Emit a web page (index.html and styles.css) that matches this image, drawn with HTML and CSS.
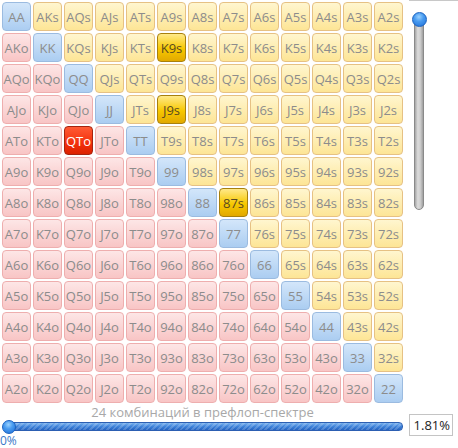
FILE: index.html
```html
<!DOCTYPE html>
<html>
<head>
<meta charset="utf-8">
<link rel="stylesheet" href="styles.css">
</head>
<body>
<div class="app">
  <div class="top">
    <div class="grid">
      <div class="c p">AA</div><div class="c s">AKs</div><div class="c s">AQs</div><div class="c s">AJs</div><div class="c s">ATs</div><div class="c s">A9s</div><div class="c s">A8s</div><div class="c s">A7s</div><div class="c s">A6s</div><div class="c s">A5s</div><div class="c s">A4s</div><div class="c s">A3s</div><div class="c s">A2s</div>
      <div class="c o">AKo</div><div class="c p">KK</div><div class="c s">KQs</div><div class="c s">KJs</div><div class="c s">KTs</div><div class="c s sel">K9s</div><div class="c s">K8s</div><div class="c s">K7s</div><div class="c s">K6s</div><div class="c s">K5s</div><div class="c s">K4s</div><div class="c s">K3s</div><div class="c s">K2s</div>
      <div class="c o">AQo</div><div class="c o">KQo</div><div class="c p">QQ</div><div class="c s">QJs</div><div class="c s">QTs</div><div class="c s">Q9s</div><div class="c s">Q8s</div><div class="c s">Q7s</div><div class="c s">Q6s</div><div class="c s">Q5s</div><div class="c s">Q4s</div><div class="c s">Q3s</div><div class="c s">Q2s</div>
      <div class="c o">AJo</div><div class="c o">KJo</div><div class="c o">QJo</div><div class="c p">JJ</div><div class="c s">JTs</div><div class="c s sel">J9s</div><div class="c s">J8s</div><div class="c s">J7s</div><div class="c s">J6s</div><div class="c s">J5s</div><div class="c s">J4s</div><div class="c s">J3s</div><div class="c s">J2s</div>
      <div class="c o">ATo</div><div class="c o">KTo</div><div class="c o hot">QTo</div><div class="c o">JTo</div><div class="c p">TT</div><div class="c s">T9s</div><div class="c s">T8s</div><div class="c s">T7s</div><div class="c s">T6s</div><div class="c s">T5s</div><div class="c s">T4s</div><div class="c s">T3s</div><div class="c s">T2s</div>
      <div class="c o">A9o</div><div class="c o">K9o</div><div class="c o">Q9o</div><div class="c o">J9o</div><div class="c o">T9o</div><div class="c p">99</div><div class="c s">98s</div><div class="c s">97s</div><div class="c s">96s</div><div class="c s">95s</div><div class="c s">94s</div><div class="c s">93s</div><div class="c s">92s</div>
      <div class="c o">A8o</div><div class="c o">K8o</div><div class="c o">Q8o</div><div class="c o">J8o</div><div class="c o">T8o</div><div class="c o">98o</div><div class="c p">88</div><div class="c s sel">87s</div><div class="c s">86s</div><div class="c s">85s</div><div class="c s">84s</div><div class="c s">83s</div><div class="c s">82s</div>
      <div class="c o">A7o</div><div class="c o">K7o</div><div class="c o">Q7o</div><div class="c o">J7o</div><div class="c o">T7o</div><div class="c o">97o</div><div class="c o">87o</div><div class="c p">77</div><div class="c s">76s</div><div class="c s">75s</div><div class="c s">74s</div><div class="c s">73s</div><div class="c s">72s</div>
      <div class="c o">A6o</div><div class="c o">K6o</div><div class="c o">Q6o</div><div class="c o">J6o</div><div class="c o">T6o</div><div class="c o">96o</div><div class="c o">86o</div><div class="c o">76o</div><div class="c p">66</div><div class="c s">65s</div><div class="c s">64s</div><div class="c s">63s</div><div class="c s">62s</div>
      <div class="c o">A5o</div><div class="c o">K5o</div><div class="c o">Q5o</div><div class="c o">J5o</div><div class="c o">T5o</div><div class="c o">95o</div><div class="c o">85o</div><div class="c o">75o</div><div class="c o">65o</div><div class="c p">55</div><div class="c s">54s</div><div class="c s">53s</div><div class="c s">52s</div>
      <div class="c o">A4o</div><div class="c o">K4o</div><div class="c o">Q4o</div><div class="c o">J4o</div><div class="c o">T4o</div><div class="c o">94o</div><div class="c o">84o</div><div class="c o">74o</div><div class="c o">64o</div><div class="c o">54o</div><div class="c p">44</div><div class="c s">43s</div><div class="c s">42s</div>
      <div class="c o">A3o</div><div class="c o">K3o</div><div class="c o">Q3o</div><div class="c o">J3o</div><div class="c o">T3o</div><div class="c o">93o</div><div class="c o">83o</div><div class="c o">73o</div><div class="c o">63o</div><div class="c o">53o</div><div class="c o">43o</div><div class="c p">33</div><div class="c s">32s</div>
      <div class="c o">A2o</div><div class="c o">K2o</div><div class="c o">Q2o</div><div class="c o">J2o</div><div class="c o">T2o</div><div class="c o">92o</div><div class="c o">82o</div><div class="c o">72o</div><div class="c o">62o</div><div class="c o">52o</div><div class="c o">42o</div><div class="c o">32o</div><div class="c p">22</div>
    </div>
    <div class="side">
      <div class="vtrack">
        <div class="vknob"></div>
      </div>
    </div>
  </div>
  <div class="bottom">
    <div class="bleft">
      <div class="caption">24 комбинаций в префлоп-спектре</div>
      <div class="htrack-wrap">
        <div class="htrack"></div>
        <div class="hknob"></div>
      </div>
      <div class="zero">0%</div>
    </div>
    <div class="valuebox">1.81%</div>
  </div>
</div>
</body>
</html>
```
FILE: styles.css
```css
html, body {
  margin: 0;
  padding: 0;
  background: #ffffff;
}
.app {
  width: 458px;
  height: 448px;
  overflow: hidden;
  font-family: "Open Sans", "DejaVu Sans", sans-serif;
}
.top {
  display: flex;
  align-items: flex-start;
}
.grid {
  display: grid;
  grid-template-columns: repeat(13, 29px);
  grid-auto-rows: 29px;
  gap: 2px;
  padding: 2px 0 0 2px;
}
.c {
  box-sizing: border-box;
  border: 1px solid;
  border-radius: 4px;
  display: flex;
  align-items: center;
  justify-content: center;
  font-size: 13px;
  color: #8c8c8c;
  white-space: nowrap;
}
.c.p {
  background: linear-gradient(#d3e6fa, #abcdf1);
  border-color: #9bbbe0;
}
.c.s {
  background: linear-gradient(#fff6cf, #fde596);
  border-color: #e6c184;
}
.c.o {
  background: linear-gradient(#fde6e6, #f8c5c5);
  border-color: #eeaeae;
}
.c.s.sel {
  background: linear-gradient(#ffe98a 0%, #f7c800 55%, #e2a900 100%);
  border-color: #a7800e;
  color: #5a4a20;
}
.c.o.hot {
  background: linear-gradient(#ff5b35 0%, #f3300c 60%, #dc2200 100%);
  border-color: #a32410;
  color: #ffffff;
}
.side {
  margin-left: 6px;
  width: 49px;
  border-top: 1px solid #c8c8c8;
  flex: none;
}
.vtrack {
  position: relative;
  margin: 18px 0 0 5px;
  width: 10px;
  height: 191px;
  box-sizing: border-box;
  border: 1px solid #8a8a8a;
  border-radius: 0 0 5px 5px;
  background: linear-gradient(90deg, #a6a6a6 0%, #dcdcdc 35%, #cfcfcf 65%, #a0a0a0 100%);
}
.vknob {
  position: absolute;
  left: -3px;
  top: -8px;
  width: 15px;
  height: 15px;
  box-sizing: border-box;
  border-radius: 50%;
  border: 1px solid #1a62c0;
  background: radial-gradient(circle at 45% 30%, #9ad2ff 0%, #4a9cf0 40%, #1d6fd8 100%);
}
.bottom {
  display: flex;
  align-items: flex-start;
}
.bleft {
  width: 405px;
  flex: none;
}
.caption {
  margin-top: 1px;
  height: 16px;
  line-height: 16px;
  font-size: 13px;
  color: #a8a8a8;
  text-align: center;
}
.htrack-wrap {
  position: relative;
  margin-top: 1px;
  height: 12px;
}
.htrack {
  position: absolute;
  left: 4px;
  right: 2px;
  top: 1px;
  height: 9px;
  box-sizing: border-box;
  border: 1px solid #2c5fb2;
  border-radius: 4px;
  background:
    repeating-linear-gradient(135deg, rgba(255,255,255,0.18) 0 2px, rgba(255,255,255,0) 2px 4px),
    linear-gradient(#7ab2ee, #3f83da 50%, #2462c0);
}
.hknob {
  position: absolute;
  left: 2px;
  top: -1px;
  width: 14px;
  height: 14px;
  box-sizing: border-box;
  border-radius: 50%;
  border: 1px solid #1a62c0;
  background: radial-gradient(circle at 45% 30%, #9ad2ff 0%, #4a9cf0 40%, #1d6fd8 100%);
}
.zero {
  margin-top: 2px;
  margin-left: 0;
  font-size: 12px;
  line-height: 12px;
  height: 12px;
  color: #3a78c8;
}
.valuebox {
  margin-left: 4px;
  margin-top: 11px;
  width: 44px;
  height: 22px;
  box-sizing: border-box;
  border: 1px solid #c4c4c4;
  background: #ffffff;
  font-size: 13px;
  line-height: 20px;
  color: #222222;
  text-align: right;
  padding-right: 2px;
  flex: none;
}
```
